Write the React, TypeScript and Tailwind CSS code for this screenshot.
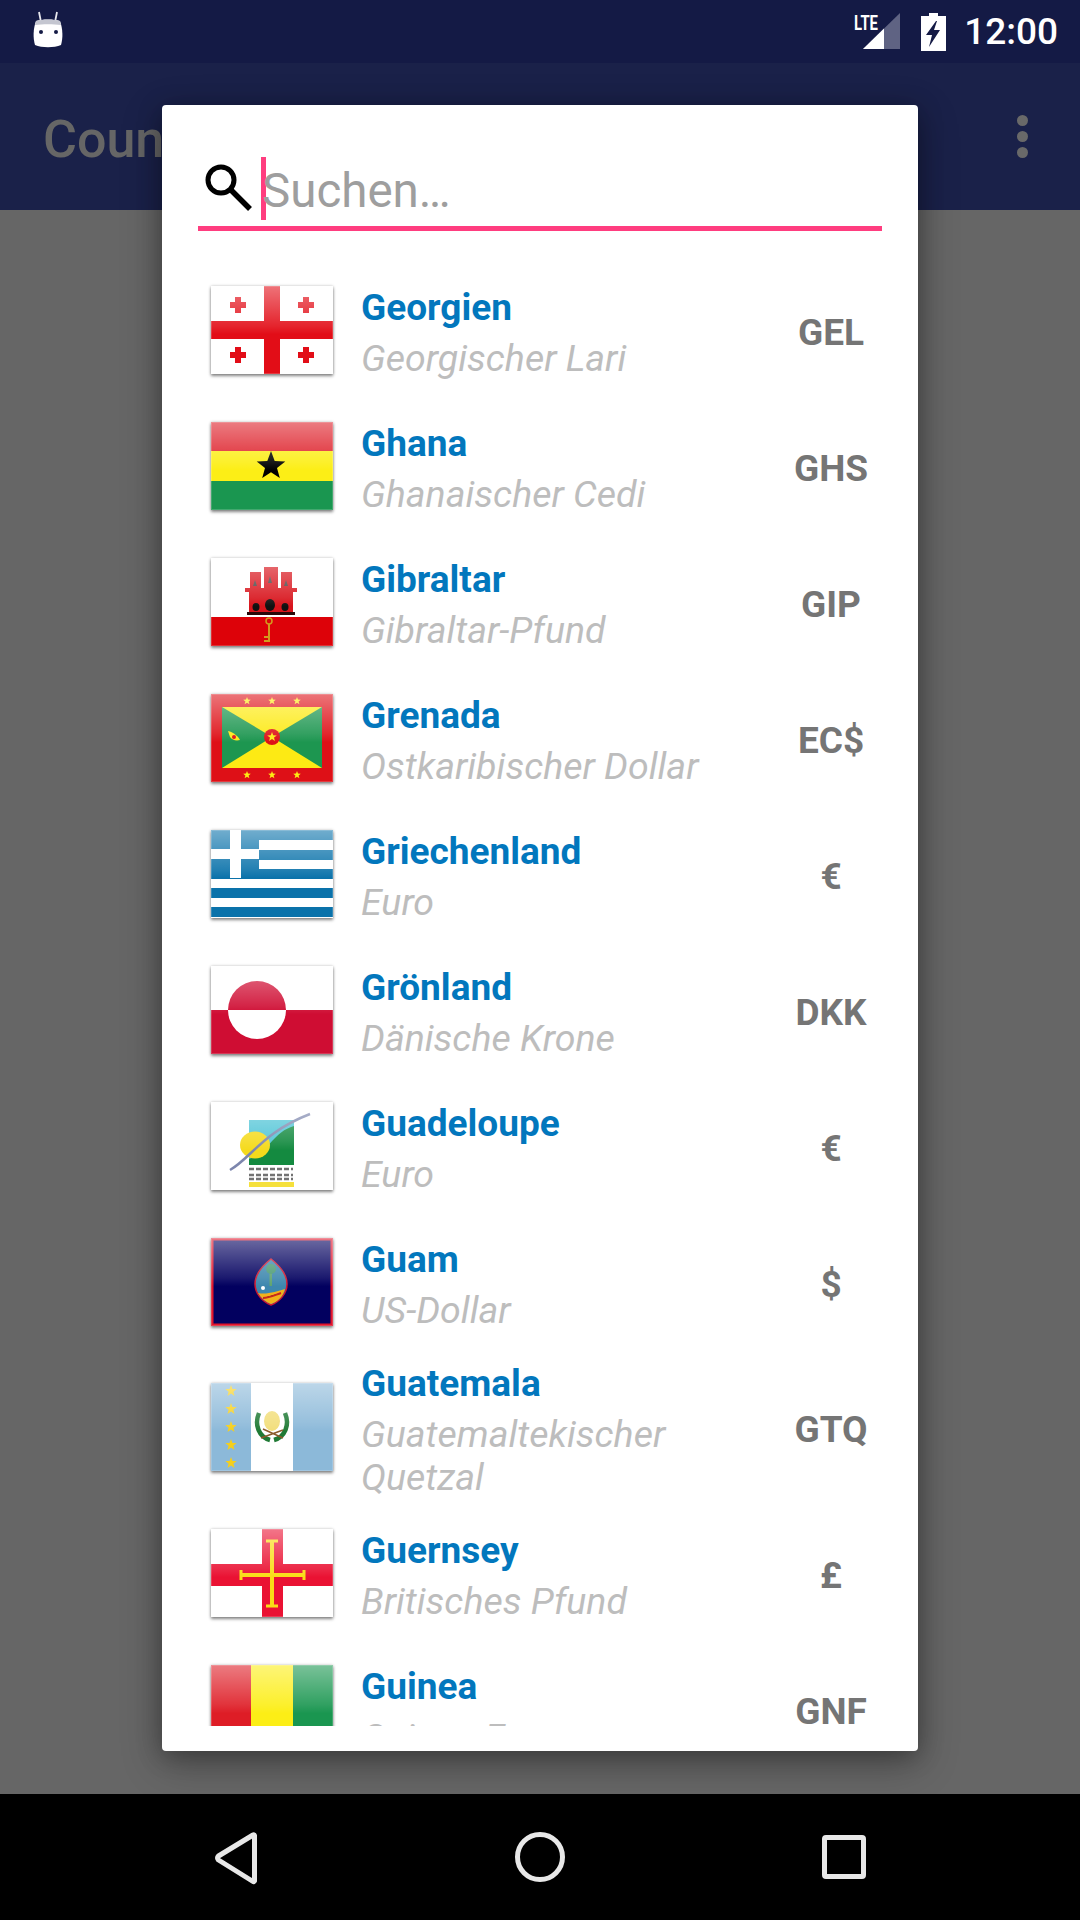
import type { ReactNode } from "react";

const roboto = "font-['Roboto',sans-serif]";

// All flags share a 122x88 canvas, the gloss is laid on top by <Flag />
function Flag({ id, children }: { id: string; children: ReactNode }) {
  return (
    <div className="w-[122px] h-[88px] shrink-0 mt-[-3px] shadow-[0_2px_3px_rgba(0,0,0,0.45),0_0_3px_rgba(0,0,0,0.2)]">
      <svg width="122" height="88" viewBox="0 0 122 88" className="block blur-[0.6px]">
        <defs>
          <linearGradient id={id} x1="0" y1="0" x2="0" y2="1">
            <stop offset="0" stopColor="#fff" stopOpacity="0.42" />
            <stop offset="0.45" stopColor="#fff" stopOpacity="0.1" />
            <stop offset="0.55" stopColor="#fff" stopOpacity="0" />
          </linearGradient>
        </defs>
        {children}
        <rect x="0" y="0" width="122" height="88" fill={`url(#${id})`} />
        <rect x="0.5" y="0.5" width="121" height="87" fill="none" stroke="#fff" strokeOpacity="0.18" />
      </svg>
    </div>
  );
}

const star = (cx: number, cy: number, r: number, fill: string) => {
  const pts: string[] = [];
  for (let i = 0; i < 10; i++) {
    const a = (Math.PI / 5) * i - Math.PI / 2;
    const rr = i % 2 === 0 ? r : r * 0.42;
    pts.push(`${(cx + Math.cos(a) * rr).toFixed(1)},${(cy + Math.sin(a) * rr).toFixed(1)}`);
  }
  return <polygon key={`${cx}-${cy}`} points={pts.join(" ")} fill={fill} />;
};

const smallCross = (cx: number, cy: number) => (
  <path key={`${cx}-${cy}`} d={`M${cx - 3} ${cy - 8}h6v5h5v6h-5v5h-6v-5h-5v-6h5z`} fill="#e20d17" />
);

function Georgia() {
  return (
    <Flag id="g-ge">
      <rect width="122" height="88" fill="#fff" />
      <rect x="53" width="16" height="88" fill="#e20d17" />
      <rect y="35" width="122" height="18" fill="#e20d17" />
      {[smallCross(27, 19), smallCross(95, 19), smallCross(27, 69), smallCross(95, 69)]}
    </Flag>
  );
}

function Ghana() {
  return (
    <Flag id="g-gh">
      <rect width="122" height="29" fill="#dd1c26" />
      <rect y="29" width="122" height="30" fill="#fcee16" />
      <rect y="59" width="122" height="29" fill="#1a9650" />
      {star(60, 44, 15, "#000")}
    </Flag>
  );
}

function Gibraltar() {
  return (
    <Flag id="g-gi">
      <rect width="122" height="88" fill="#fff" />
      <rect y="59" width="122" height="29" fill="#dd0209" />
      {/* castle: three towers on a wall */}
      <rect x="39" y="14" width="11" height="20" fill="#d8141c" />
      <rect x="53" y="9" width="14" height="25" fill="#d8141c" />
      <rect x="70" y="14" width="11" height="20" fill="#d8141c" />
      <rect x="34" y="30" width="52" height="4" fill="#d8141c" />
      <rect x="38" y="33" width="44" height="21" fill="#d8141c" />
      <rect x="36" y="54" width="48" height="3" fill="#2a0a0a" />
      <ellipse cx="45" cy="49" rx="3.500" ry="4" fill="#111" />
      <ellipse cx="59" cy="47" rx="5" ry="6" fill="#111" />
      <ellipse cx="74" cy="49" rx="3.500" ry="4" fill="#111" />
      <path d="M44 22l2 6h-4zM59 18l2 7h-4zM75 22l2 6h-4z" fill="#444" />
      <circle cx="58" cy="63" r="3" fill="none" stroke="#d39a1e" strokeWidth="1.500" />
      <path d="M58 66v18M58 83h-5M58 79h-5" stroke="#d39a1e" strokeWidth="2" fill="none" />
    </Flag>
  );
}

function Grenada() {
  return (
    <Flag id="g-gd">
      <rect width="122" height="88" fill="#de1017" />
      <rect x="11" y="13" width="100" height="61" fill="#fdea14" />
      <polygon points="11,13 61,43 11,74" fill="#1d9650" />
      <polygon points="111,13 61,43 111,74" fill="#1d9650" />
      <circle cx="61" cy="43" r="8" fill="#de1017" />
      {star(61, 43, 5, "#fdea14")}
      <path d="M17 37c5 1 10 5 12 9-4 1-8 0-10-3z" fill="#fdea14" />
      <circle cx="23" cy="43" r="2" fill="#de1017" />
      {[36, 61, 86].map((x) => star(x, 7, 4, "#fdea14"))}
      {[36, 61, 86].map((x) => star(x, 81, 4, "#fdea14"))}
    </Flag>
  );
}

function Greece() {
  const blue = "#0a72aa";
  return (
    <Flag id="g-gr">
      <rect width="122" height="88" fill="#fff" />
      {[0, 20, 39, 58, 77].map((y) => (
        <rect key={y} y={y} width="122" height="10" fill={blue} />
      ))}
      <rect width="48" height="48" fill={blue} />
      <rect x="19" width="11" height="48" fill="#fff" />
      <rect y="19" width="48" height="10" fill="#fff" />
    </Flag>
  );
}

function Greenland() {
  return (
    <Flag id="g-gl">
      <rect width="122" height="44" fill="#fff" />
      <rect y="44" width="122" height="44" fill="#cf0d33" />
      <path d="M17 44a29 29 0 0 1 58 0z" fill="#cf0d33" />
      <path d="M17 44a29 29 0 0 0 58 0z" fill="#fff" />
    </Flag>
  );
}

function Guadeloupe() {
  return (
    <Flag id="g-gp">
      <rect width="122" height="88" fill="#fff" />
      <rect x="38" y="18" width="45" height="45" fill="#4fc4d6" />
      <path d="M38 63V57C58 50 62 30 83 24v39z" fill="#148a40" />
      <ellipse cx="44" cy="43" rx="15" ry="13.500" fill="#f5da1c" />
      <path d="M19 68C40 56 52 30 99 12" stroke="#7d86ad" strokeWidth="2.500" fill="none" />
      <path d="M38 67h44M38 73h44M38 77h44" stroke="#444" strokeWidth="2.500" strokeDasharray="5 2" opacity="0.75" />
      <rect x="38" y="80" width="45" height="5" fill="#f5e03c" />
    </Flag>
  );
}

function Guam() {
  return (
    <Flag id="g-gu">
      <rect width="122" height="88" fill="#e0152b" />
      <rect x="2.500" y="2.500" width="117" height="83" fill="#02005f" />
      <path d="M60 21c9 7 16 16 16 25 0 10-8 18-16 21-8-3-16-11-16-21 0-9 7-18 16-25z" fill="#3d87ae" stroke="#d1162e" strokeWidth="1.500" />
      <path d="M47 55c9 2 19-2 27-4-2 8-8 13-14 15-5-2-10-6-13-11z" fill="#f2b11a" />
      <path d="M52 60c6 0 12-3 18-5" stroke="#c8281c" strokeWidth="2" />
      <rect x="58.500" y="32" width="2.500" height="16" fill="#5fa36e" />
      <circle cx="60" cy="31" r="5" fill="#4a9a72" />
      <circle cx="52" cy="50" r="2" fill="#fff" />
    </Flag>
  );
}

function Guatemala() {
  return (
    <Flag id="g-gt">
      <rect width="40" height="88" fill="#8cb9d9" />
      <rect x="40" width="42" height="88" fill="#fff" />
      <rect x="82" width="40" height="88" fill="#8cb9d9" />
      {[8, 26, 44, 62, 80].map((y) => star(20, y, 6, "#f5cf1b"))}
      <path d="M48 30c-5 12 0 24 11 27" stroke="#1f7a35" strokeWidth="4.500" fill="none" />
      <path d="M74 30c5 12 0 24-11 27" stroke="#1f7a35" strokeWidth="4.500" fill="none" />
      <ellipse cx="61" cy="38" rx="8" ry="10" fill="#f2de7a" />
      <path d="M50 55l22-8M52 46l20 9" stroke="#8a5a2b" strokeWidth="1.500" />
    </Flag>
  );
}

function Guernsey() {
  return (
    <Flag id="g-gg">
      <rect width="122" height="88" fill="#fff" />
      <rect x="51" width="21" height="88" fill="#ea1233" />
      <rect y="35" width="122" height="22" fill="#ea1233" />
      <path d="M61 12v65M30 46h63" stroke="#f9dd16" strokeWidth="4" />
      <path d="M55 12h12M55 77h12M30 41v10M93 41v10" stroke="#f9dd16" strokeWidth="3" />
    </Flag>
  );
}

function Guinea() {
  return (
    <Flag id="g-gn">
      <rect width="40" height="88" fill="#de1d26" />
      <rect x="40" width="42" height="88" fill="#fcee16" />
      <rect x="82" width="40" height="88" fill="#1a9650" />
    </Flag>
  );
}

const countries = [
  { name: "Georgien", currency: "Georgischer Lari", code: "GEL", flag: <Georgia /> },
  { name: "Ghana", currency: "Ghanaischer Cedi", code: "GHS", flag: <Ghana /> },
  { name: "Gibraltar", currency: "Gibraltar-Pfund", code: "GIP", flag: <Gibraltar /> },
  { name: "Grenada", currency: "Ostkaribischer Dollar", code: "EC$", flag: <Grenada /> },
  { name: "Griechenland", currency: "Euro", code: "€", flag: <Greece /> },
  { name: "Grönland", currency: "Dänische Krone", code: "DKK", flag: <Greenland /> },
  { name: "Guadeloupe", currency: "Euro", code: "€", flag: <Guadeloupe /> },
  { name: "Guam", currency: "US-Dollar", code: "$", flag: <Guam /> },
  { name: "Guatemala", currency: "Guatemaltekischer Quetzal", code: "GTQ", flag: <Guatemala /> },
  { name: "Guernsey", currency: "Britisches Pfund", code: "£", flag: <Guernsey /> },
  { name: "Guinea", currency: "Guinea-Franc", code: "GNF", flag: <Guinea /> },
];

function CountryRow({ name, currency, code, flag }: { name: string; currency: string; code: string; flag: ReactNode }) {
  return (
    <div className="flex items-center min-h-[136px] pt-[8px] pb-[6px] pl-[13px] shrink-0">
      {flag}
      <div className="flex-1 ml-[28px] pt-[2px] min-w-0">
        <div className="text-[37px] leading-[48px] font-bold text-[#0277bd]">{name}</div>
        <div className="mt-[5px] text-[37.5px] leading-[43px] italic text-[#bdbdbd]">{currency}</div>
      </div>
      <div className="w-[102px] shrink-0 pt-[3px] text-center text-[37px] font-bold text-[#757575]">{code}</div>
    </div>
  );
}

export default function App() {
  return (
    <div className={`relative w-[1080px] h-[1920px] overflow-hidden flex flex-col bg-[#666666] ${roboto}`}>
      {/* status bar */}
      <div className="h-[63px] bg-[#141a45] flex items-center justify-between pl-[32px] pr-[22px]">
        <svg width="32" height="38" viewBox="0 0 32 38" className="mt-[-3px]">
          <path d="M7 1l2 10M25 1l-2 10" stroke="#e8e8ee" strokeWidth="1.800" />
          <path d="M4 10c7-2 17-2 24 0 3 8 3 17 1 24-7 3-19 3-26 0-2-7-2-16 1-24z" fill="#fff" />
          <path d="M4 10c7-2 17-2 24 0l1 4c-8-1-18-1-26 0z" fill="#c4c6d0" />
          <circle cx="9" cy="21" r="2" fill="#141a45" />
          <circle cx="24" cy="21" r="2" fill="#141a45" />
        </svg>
        <div className="flex items-center">
          <svg width="46" height="37" viewBox="0 0 46 37" className="mr-[21px]">
            <polygon points="9,36 46,0 46,36" fill="#5f6383" />
            <polygon points="9,36 30,15.500 30,36" fill="#fff" />
            <text x="0" y="17" fontSize="20" fontWeight="700" fill="#fff" fontFamily="Roboto" textLength="24" lengthAdjust="spacingAndGlyphs">LTE</text>
          </svg>
          <svg width="25" height="38" viewBox="0 0 25 38" className="mr-[18px]">
            <path d="M8 0h9v3h8v35H0V3h8z" fill="#fff" />
            <path d="M15 8L5 22h6l-3 12 11-17h-6l3-9z" fill="#141a45" />
          </svg>
          <span className="text-[37px] leading-none font-medium text-white">12:00</span>
        </div>
      </div>

      {/* app bar, dimmed behind the dialog */}
      <div className="h-[147px] bg-[#1a2149] flex items-center justify-between pl-[43px] pr-[52px]">
        <span className="text-[52px] leading-none font-medium text-[#666666] mt-[6px]">Country</span>
        <div className="flex flex-col gap-[5px]">
          <div className="w-[11px] h-[11px] rounded-full bg-[#696969]" />
          <div className="w-[11px] h-[11px] rounded-full bg-[#696969]" />
          <div className="w-[11px] h-[11px] rounded-full bg-[#696969]" />
        </div>
      </div>

      <div className="flex-1 bg-[#666666]" />

      {/* nav bar */}
      <div className="h-[126px] bg-black flex items-center">
        <svg width="1080" height="126" viewBox="0 0 1080 126" fill="none" stroke="#e8e8e8" strokeWidth="5">
          <path d="M254.500 41.500v45.500a1 1 0 0 1-1.500.500L218.500 66a3 3 0 0 1 0-4L253 41a1 1 0 0 1 1.500.500z" strokeLinejoin="round" />
          <circle cx="540" cy="63" r="22.500" />
          <rect x="824.500" y="43.500" width="39" height="39" rx="1.500" />
        </svg>
      </div>

      {/* search dialog */}
      <div className="absolute left-[162px] top-[105px] w-[756px] h-[1646px] bg-white rounded-[4px] shadow-[0_12px_40px_rgba(0,0,0,0.3),0_4px_24px_rgba(0,0,0,0.25)] px-[36px] flex flex-col">
        <div className="h-[126px] relative border-b-[5px] border-[#ff3d7f] shrink-0">
          <svg width="48" height="48" viewBox="0 0 48 48" fill="none" stroke="#000" className="absolute left-[7px] top-[59px]">
            <circle cx="16" cy="16" r="13" strokeWidth="5" />
            <path d="M25 25l20 20" strokeWidth="5.500" />
          </svg>
          <div className="absolute left-[63px] top-[52px] w-[5px] h-[63px] bg-[#ff3d7f]" />
          <span className="absolute left-[64px] top-[58px] text-[47.500px] leading-[56px] text-[#9e9e9e]">Suchen…</span>
        </div>
        <div className="mt-[31px] h-[1464px] overflow-hidden flex flex-col">
          {countries.map((c) => (
            <CountryRow key={c.name} {...c} />
          ))}
        </div>
      </div>
    </div>
  );
}
